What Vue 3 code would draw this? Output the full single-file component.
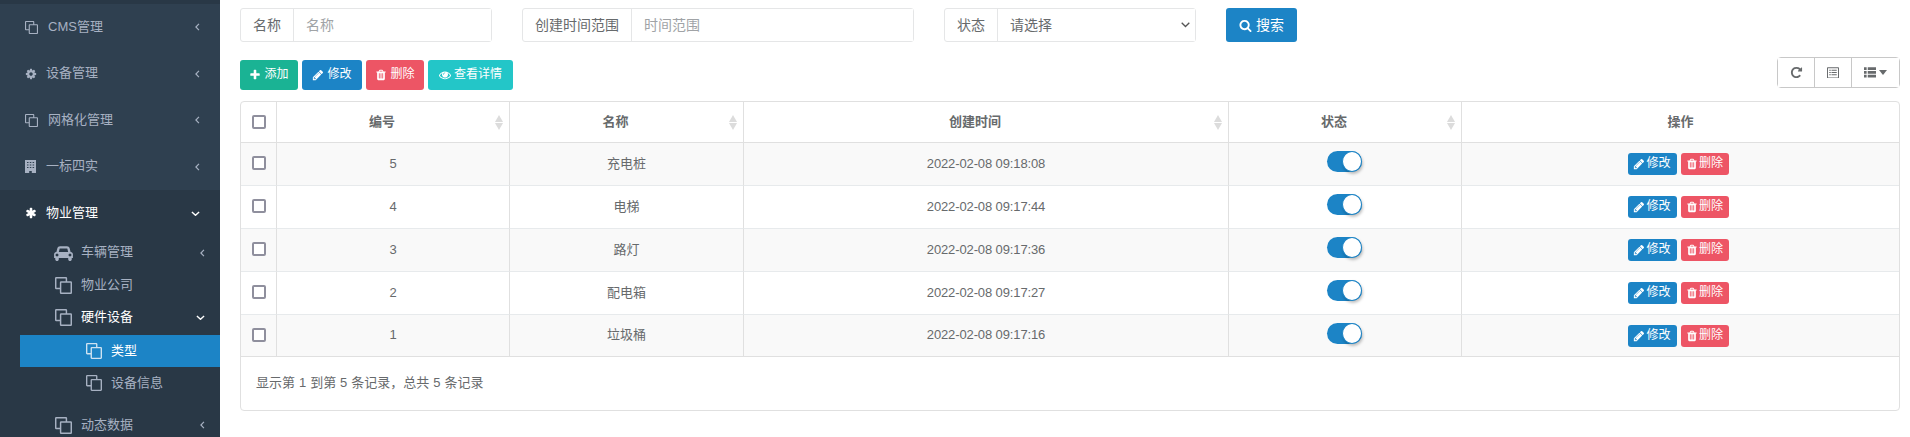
<script setup>
const P = {
  gear: ['0 0 1792 1792', 'M1152 896q0-106-75-181t-181-75-181 75-75 181 75 181 181 75 181-75 75-181zm512-109v222q0 12-8 23t-20 13l-185 28q-19 54-39 91 35 50 107 138 10 12 10 25t-9 23q-27 37-99 108t-94 71q-12 0-26-9l-138-108q-44 23-91 38-16 136-29 186-7 28-36 28h-222q-14 0-24.5-8.5t-11.5-21.5l-28-184q-49-16-90-37l-141 107q-10 9-25 9-14 0-25-11-126-114-165-168-7-10-7-23 0-12 8-23 15-21 51-66.5t54-70.5q-27-50-41-99l-183-27q-13-2-21-12.5t-8-23.5v-222q0-12 8-23t19-13l186-28q14-46 39-92-40-57-107-138-10-12-10-24 0-10 9-23 26-36 98.5-107.5t94.5-71.5q13 0 26 10l138 107q44-23 91-38 16-136 29-186 7-28 36-28h222q14 0 24.5 8.5t11.5 21.5l28 184q49 16 90 37l142-107q9-9 24-9 13 0 25 10 129 119 165 170 7 8 7 22 0 12-8 23-15 21-51 66.5t-54 70.5q26 50 41 98l183 28q13 2 21 12.5t8 23.5z'],
  plus: ['0 0 1792 1792', 'M1600 736v192q0 40-28 68t-68 28h-416v416q0 40-28 68t-68 28h-192q-40 0-68-28t-28-68v-416h-416q-40 0-68-28t-28-68v-192q0-40 28-68t68-28h416v-416q0-40 28-68t68-28h192q40 0 68 28t28 68v416h416q40 0 68 28t28 68z'],
  pencil: ['0 0 1792 1792', 'M491 1536l91-91-235-235-91 91v107h128v128h107zm523-928q0-22-22-22-10 0-17 7l-542 542q-7 7-7 17 0 22 22 22 10 0 17-7l542-542q7-7 7-17zm-54-192l416 416-832 832h-416v-416zm683 96q0 53-37 90l-166 166-416-416 166-165q36-38 90-38 53 0 91 38l235 234q37 39 37 91z'],
  trash: ['0 0 1792 1792', 'M704 1376v-704q0-14-9-23t-23-9h-64q-14 0-23 9t-9 23v704q0 14 9 23t23 9h64q14 0 23-9t9-23zm256 0v-704q0-14-9-23t-23-9h-64q-14 0-23 9t-9 23v704q0 14 9 23t23 9h64q14 0 23-9t9-23zm256 0v-704q0-14-9-23t-23-9h-64q-14 0-23 9t-9 23v704q0 14 9 23t23 9h64q14 0 23-9t9-23zm-544-992h448l-48-117q-7-9-17-11h-317q-10 2-17 11zm928 32v64q0 14-9 23t-23 9h-96v948q0 83-47 143.5t-113 60.5h-832q-66 0-113-58.5t-47-141.5v-952h-96q-14 0-23-9t-9-23v-64q0-14 9-23t23-9h309l70-167q15-37 54-63t79-26h320q40 0 79 26t54 63l70 167h309q14 0 23 9t9 23z'],
  eye: ['0 0 1792 1792', 'M1664 960q-152-236-381-353 61 104 61 225 0 185-131.5 316.5t-316.5 131.5-316.5-131.5-131.5-316.5q0-121 61-225-229 117-381 353 133 205 333.5 326.5t434.5 121.5 434.5-121.5 333.5-326.5zm-720-384q0-20-14-34t-34-14q-125 0-214.5 89.5t-89.5 214.5q0 20 14 34t34 14 34-14 14-34q0-86 61-147t147-61q20 0 34-14t14-34zm848 384q0 34-20 69-140 230-376.5 368.5t-499.5 138.5-499.5-139-376.5-368q-20-35-20-69t20-69q140-229 376.5-368t499.5-139 499.5 139 376.5 368q20 35 20 69z'],
  search: ['0 0 1792 1792', 'M1216 832q0-185-131.5-316.5t-316.5-131.5-316.5 131.5-131.5 316.5 131.5 316.5 316.5 131.5 316.5-131.5 131.5-316.5zm512 832q0 52-38 90t-90 38q-54 0-90-38l-343-342q-179 124-399 124-143 0-273.5-55.5t-225-150-150-225-55.5-273.5 55.5-273.5 150-225 225-150 273.5-55.5 273.5 55.5 225 150 150 225 55.5 273.5q0 220-124 399l343 343q37 37 37 90z'],
  repeat: ['0 0 1792 1792', 'M1664 256v448q0 26-19 45t-45 19h-448q-42 0-59-40-17-39 14-69l138-138q-148-137-349-137-104 0-198.5 40.5t-163.5 109.5-109.5 163.5-40.5 198.5 40.5 198.5 109.5 163.5 163.5 109.5 198.5 40.5q119 0 225-52t179-147q7-10 23-12 15 0 25 9l137 138q9 8 9.5 20.5t-7.5 22.5q-109 132-264 204.5t-327 72.5q-156 0-298-61t-245-164-164-245-61-298 61-298 164-245 245-164 298-61q147 0 284.5 55.5t244.5 156.5l130-129q29-31 70-14 39 17 39 59z'],
  car: ['0 0 2048 1792', 'M480 1088q0-66-47-113t-113-47-113 47-47 113 47 113 113 47 113-47 47-113zm36-320h1016l-89-357q-2-8-14-17.5t-21-9.5h-768q-9 0-21 9.5t-14 17.5zm1372 320q0-66-47-113t-113-47-113 47-47 113 47 113 113 47 113-47 47-113zm160-96v384q0 14-9 23t-23 9h-96v128q0 80-56 136t-136 56-136-56-56-136v-128h-1024v128q0 80-56 136t-136 56-136-56-56-136v-128h-96q-14 0-23-9t-9-23v-384q0-93 65.5-158.5t158.5-65.5h28l105-419q23-94 104-157.5t179-63.5h768q98 0 179 63.5t104 157.5l105 419h28q93 0 158.5 65.5t65.5 158.5z'],
  asterisk: ['0 0 1792 1792', 'M1546 1050q46 26 59.5 77.5t-12.5 97.5l-64 110q-26 46-77.5 59.5t-97.5-12.5l-266-153v307q0 52-38 90t-90 38h-128q-52 0-90-38t-38-90v-307l-266 153q-46 26-97.5 12.5t-77.5-59.5l-64-110q-26-46-12.5-97.5t59.5-77.5l266-154-266-154q-46-26-59.5-77.5t12.5-97.5l64-110q26-46 77.5-59.5t97.5 12.5l266 153v-307q0-52 38-90t90-38h128q52 0 90 38t38 90v307l266-153q46-26 97.5-12.5t77.5 59.5l64 110q26 46 12.5 97.5t-59.5 77.5l-266 154z'],
  building: ['0 0 11 13', 'M0 0h11v13H6.800v-2H4.200v2H0zM2 2v1h1.500V2zm2.800 0v1h1.500V2zm2.800 0v1h1.500V2zM2 4.500v1h1.500v-1zm2.800 0v1h1.500v-1zm2.800 0v1h1.500v-1zM2 7v1h1.500V7zm2.800 0v1h1.500V7zm2.800 0v1h1.500V7z'],
  copy: ['0 0 14 14', 'M1 0h8a1 1 0 0 1 1 1v2.500h3a1 1 0 0 1 1 1V13a1 1 0 0 1-1 1H5a1 1 0 0 1-1-1v-3H1a1 1 0 0 1-1-1V1a1 1 0 0 1 1-1zm.2 1.200v7.600H4V4.500a1 1 0 0 1 1-1h3.800V1.200zm4 3.500v8.100h7.600V4.700z'],
  listAlt: ['0 0 16 15', 'M1 0h14a1 1 0 0 1 1 1v13a1 1 0 0 1-1 1H1a1 1 0 0 1-1-1V1a1 1 0 0 1 1-1zm.3 1.500v12.200h13.400V1.500zM3 3.500h2v1.400H3zm3 0h7v1.400H6zM3 6.500h2v1.400H3zm3 0h7v1.400H6zM3 9.500h2v1.400H3zm3 0h7v1.400H6z'],
  thList: ['0 0 16 14', 'M0 0h3.500v3.800H0zm5 0h11v3.800H5zM0 5h3.500v3.800H0zm5 0h11v3.800H5zM0 10h3.500v3.800H0zm5 0h11v3.800H5z'],
  caret: ['0 0 8 5', 'M0 0h8L4 5z']
}

const mainMenu = [
  { label: 'CMS管理', icon: 'copy', cls: 'w13', gap: 'g10' },
  { label: '设备管理', icon: 'gear', cls: 'w12', gap: 'g9' },
  { label: '网格化管理', icon: 'copy', cls: 'w13', gap: 'g10' },
  { label: '一标四实', icon: 'building', cls: 'w11', gap: 'g10' }
]

const toolbar = [
  { label: '添加', icon: 'plus', cls: 'success', size: 'b58' },
  { label: '修改', icon: 'pencil', cls: 'primary', size: 'b60' },
  { label: '删除', icon: 'trash', cls: 'danger', size: 'b58' },
  { label: '查看详情', icon: 'eye', cls: 'info', size: 'b85' }
]

const heads = [
  { label: '编号', sort: true },
  { label: '名称', sort: true },
  { label: '创建时间', sort: true },
  { label: '状态', sort: true },
  { label: '操作', sort: false }
]

const rows = [
  { id: 5, name: '充电桩', time: '2022-02-08 09:18:08' },
  { id: 4, name: '电梯', time: '2022-02-08 09:17:44' },
  { id: 3, name: '路灯', time: '2022-02-08 09:17:36' },
  { id: 2, name: '配电箱', time: '2022-02-08 09:17:27' },
  { id: 1, name: '垃圾桶', time: '2022-02-08 09:17:16' }
]
</script>

<template>
  <div class="page">
    <aside class="sidebar">
      <ul class="nav">
        <li v-for="m in mainMenu" :key="m.label" class="item">
          <svg class="ic" :class="m.cls" :viewBox="P[m.icon][0]"><path :d="P[m.icon][1]" fill-rule="evenodd" /></svg>
          <span class="lbl" :class="m.gap">{{ m.label }}</span>
          <svg class="chev" viewBox="0 0 6 10"><path d="M4.800 1 1 5l3.800 4" /></svg>
        </li>
        <li class="group">
          <div class="item open">
            <svg class="ic w12" :viewBox="P.asterisk[0]"><path :d="P.asterisk[1]" /></svg>
            <span class="lbl g9">物业管理</span>
            <svg class="chevd" viewBox="0 0 10 6"><path d="M1 1l4 3.800L9 1" /></svg>
          </div>
          <ul class="sub">
            <li class="sitem">
              <svg class="car" :viewBox="P.car[0]"><path :d="P.car[1]" /></svg>
              <span>车辆管理</span>
              <svg class="chev s" viewBox="0 0 6 10"><path d="M4.800 1 1 5l3.800 4" /></svg>
            </li>
            <li class="sitem">
              <svg class="sic" :viewBox="P.copy[0]"><path :d="P.copy[1]" fill-rule="evenodd" /></svg>
              <span>物业公司</span>
            </li>
            <li class="sitem on">
              <svg class="sic" :viewBox="P.copy[0]"><path :d="P.copy[1]" fill-rule="evenodd" /></svg>
              <span>硬件设备</span>
              <svg class="chevd s" viewBox="0 0 10 6"><path d="M1 1l4 3.800L9 1" /></svg>
            </li>
            <li class="third">
              <div class="titem active">
                <svg class="sic" :viewBox="P.copy[0]"><path :d="P.copy[1]" fill-rule="evenodd" /></svg>
                <span>类型</span>
              </div>
              <div class="titem">
                <svg class="sic" :viewBox="P.copy[0]"><path :d="P.copy[1]" fill-rule="evenodd" /></svg>
                <span>设备信息</span>
              </div>
            </li>
            <li class="sitem">
              <svg class="sic" :viewBox="P.copy[0]"><path :d="P.copy[1]" fill-rule="evenodd" /></svg>
              <span>动态数据</span>
              <svg class="chev s" viewBox="0 0 6 10"><path d="M4.800 1 1 5l3.800 4" /></svg>
            </li>
          </ul>
        </li>
      </ul>
    </aside>

    <main class="main">
      <form class="filters" @submit.prevent>
        <div class="igroup g1">
          <span class="addon">名称</span>
          <input class="field" type="text" placeholder="名称" />
        </div>
        <div class="igroup g2">
          <span class="addon">创建时间范围</span>
          <input class="field" type="text" placeholder="时间范围" />
        </div>
        <div class="igroup g1">
          <span class="addon">状态</span>
          <select class="field sel"><option>请选择</option></select>
        </div>
        <button class="btn primary search" type="button">
          <svg class="bi s14" :viewBox="P.search[0]"><path :d="P.search[1]" /></svg>搜索
        </button>
      </form>

      <div class="bar">
        <div class="acts">
          <button v-for="b in toolbar" :key="b.label" class="btn act" :class="[b.cls, b.size]" type="button">
            <svg class="bi" :viewBox="P[b.icon][0]"><path :d="P[b.icon][1]" /></svg>{{ b.label }}
          </button>
        </div>
        <div class="tools">
          <button class="tool" type="button"><svg class="ti t1" :viewBox="P.repeat[0]"><path :d="P.repeat[1]" /></svg></button>
          <button class="tool" type="button"><svg class="ti t2" :viewBox="P.listAlt[0]"><path :d="P.listAlt[1]" fill-rule="evenodd" /></svg></button>
          <button class="tool wide" type="button">
            <svg class="ti t3" :viewBox="P.thList[0]"><path :d="P.thList[1]" /></svg>
            <svg class="ti t4" :viewBox="P.caret[0]"><path :d="P.caret[1]" /></svg>
          </button>
        </div>
      </div>

      <div class="panel">
        <table class="grid">
          <colgroup>
            <col class="c0" /><col class="c1" /><col class="c1b" /><col class="c3" /><col class="c1" /><col />
          </colgroup>
          <thead>
            <tr>
              <th><input class="cb" type="checkbox" /></th>
              <th v-for="h in heads" :key="h.label">
                <div class="th">
                  <span class="thl">{{ h.label }}</span>
                  <span v-if="h.sort" class="sort"><i class="up"></i><i class="down"></i></span>
                </div>
              </th>
            </tr>
          </thead>
          <tbody>
            <tr v-for="r in rows" :key="r.id">
              <td><input class="cb" type="checkbox" /></td>
              <td>{{ r.id }}</td>
              <td>{{ r.name }}</td>
              <td class="time">{{ r.time }}</td>
              <td><span class="toggle"><span class="knob"></span></span></td>
              <td>
                <div class="ops">
                  <button class="btn xs x49 primary" type="button"><svg class="bi" :viewBox="P.pencil[0]"><path :d="P.pencil[1]" /></svg>修改</button>
                  <button class="btn xs x48 danger" type="button"><svg class="bi" :viewBox="P.trash[0]"><path :d="P.trash[1]" /></svg>删除</button>
                </div>
              </td>
            </tr>
          </tbody>
        </table>
        <div class="foot">显示第 1 到第 5 条记录，总共 5 条记录</div>
      </div>
    </main>
  </div>
</template>

<style scoped>
* { box-sizing: border-box; }
.page {
  display: flex;
  width: 1910px;
  height: 437px;
  overflow: hidden;
  background: #fff;
  color: #676a6c;
  font: 13px/1.43 "Liberation Sans", "Noto Sans CJK SC", sans-serif;
}
.sidebar {
  width: 220px;
  flex: none;
  height: 437px;
  overflow: hidden;
  background: #2f4050;
  border-top: 4px solid #293846;
  color: #a7b1c2;
}
ul { list-style: none; margin: 0; padding: 0; }
.item {
  height: 46.5px;
  display: flex;
  align-items: center;
  padding: 0 20px 0 25px;
  fill: #a7b1c2;
}
.ic { flex: none; height: 14px; }
.w13 { width: 13px; height: 13px; }
.w12 { width: 12px; }
.w11 { width: 11px; height: 13px; }
.lbl { flex: 1; }
.g10 { margin-left: 10px; }
.g9 { margin-left: 9px; }
.chev { width: 5px; height: 8px; fill: none; stroke: #a7b1c2; stroke-width: 1.5; flex: none; margin-right: 0; }
.chevd { width: 9px; height: 5.400px; fill: none; stroke: #fff; stroke-width: 1.5; flex: none; margin-right: 0; }
.group { background: #293846; }
.open { color: #fff; fill: #fff; }
.sub { padding: 0; }
.sitem {
  height: 32.5px;
  display: flex;
  align-items: center;
  padding: 0 15px 0 54px;
  fill: #a7b1c2;
}
.sitem span { flex: 1; margin-left: 8px; }
.sic { width: 17px; height: 17px; margin-left: 1px; flex: none; }
.car { width: 19px; height: 16.500px; flex: none; }
.sitem .sic + span { margin-left: 9px; }
.chevd.s { margin-right: 0; }
.sitem.on { color: #fff; }
.third { padding: 1px 0 10px 20px; }
.titem {
  height: 32px;
  display: flex;
  align-items: center;
  padding-left: 65px;
  fill: #a7b1c2;
}
.titem span { margin-left: 9px; }
.titem .sic { width: 16px; height: 16px; }
.titem.active { background: #1c84c6; color: #fff; fill: #cfe3f2; }

.main { flex: 1; min-width: 0; padding: 8px 10px 0 20px; }
.filters { display: flex; gap: 30px; height: 34px; margin-bottom: 15px; font-size: 14px; }
.igroup {
  display: flex;
  height: 34px;
  border: 1px solid #e5e6e7;
  border-radius: 3px;
}
.g1 { width: 252px; }
.g2 { width: 392px; }
.addon {
  flex: none;
  padding: 0 12px;
  line-height: 32px;
  border-right: 1px solid #e5e6e7;
  color: #676a6c;
}
.field {
  flex: 1;
  min-width: 0;
  border: 0;
  outline: 0;
  padding: 0 12px;
  background-color: #fff;
  color: #676a6c;
  font: inherit;
}
.field::placeholder { color: #a0a3a6; opacity: 1; }
.sel {
  appearance: none;
  background-image: url("data:image/svg+xml,%3Csvg xmlns='http://www.w3.org/2000/svg' width='9' height='6' viewBox='0 0 9 6'%3E%3Cpath d='M.7.7l3.800 3.800L8.300.7' fill='none' stroke='%23555' stroke-width='1.300'/%3E%3C/svg%3E");
  background-repeat: no-repeat;
  background-position: right 5px center;
}
.btn {
  display: inline-flex;
  align-items: center;
  justify-content: center;
  border: 0;
  border-radius: 3px;
  color: #fff;
  fill: #fff;
  padding: 0;
  font: inherit;
}
.primary { background: #1c84c6; }
.success { background: #1ab394; }
.danger { background: #ed5565; }
.info { background: #23c6c8; }
.search { width: 71px; height: 34px; }
.bi { width: 12px; height: 12px; margin-right: 3px; flex: none; }
.s14 { width: 13px; height: 13px; margin-right: 4px; }

.bar { display: flex; justify-content: space-between; height: 44px; }
.acts { display: flex; gap: 4px; height: 30px; margin-top: 3px; }
.act { font-size: 12px; }
.b58 { width: 58px; }
.b60 { width: 60px; }
.b85 { width: 85px; }
.tools { display: flex; height: 31px; border: 1px solid #c8c8c8; border-radius: 4px; }
.tool {
  width: 37px;
  display: flex;
  align-items: center;
  justify-content: center;
  padding: 0;
  border: 0;
  border-right: 1px solid #c8c8c8;
  background: #fff;
  fill: #676a6c;
}
.tool.wide { width: 47px; border-right: 0; }
.ti { flex: none; }
.t1 { width: 13px; height: 13px; }
.t2 { width: 12px; height: 11.500px; }
.t3 { width: 12px; height: 11px; }
.t4 { width: 8px; height: 5px; margin-left: 3px; }

.panel {
  width: 1660px;
  height: 310px;
  border: 1px solid #e0e0e0;
  border-radius: 4px;
}
.grid { width: 100%; table-layout: fixed; border-collapse: separate; border-spacing: 0; }
.c0 { width: 36px; }
.c1 { width: 233px; }
.c1b { width: 234px; }
.c3 { width: 485px; }
th, td {
  padding: 0;
  text-align: center;
  vertical-align: middle;
  border-right: 1px solid #e0e0e0;
  border-bottom: 1px solid #e7eaec;
}
th:last-child, td:last-child { border-right: 0; }
th { height: 41px; border-bottom-color: #e0e0e0; font-weight: 700; }
td { height: 43px; }
.time { letter-spacing: -.12px; }
tbody tr:nth-child(odd) td { background: #f9f9f9; }
tbody tr:last-child td { border-bottom-color: #e0e0e0; height: 42px; }
.cb {
  appearance: none;
  display: block;
  width: 14px;
  height: 14px;
  margin: 0 0 0 11px;
  border: 2px solid #8f8f9d;
  border-radius: 2px;
  background: #fff;
}
td .cb { margin-bottom: 2px; }
.th { display: flex; align-items: center; padding-top: 1px; }
.thl { flex: 1; padding-right: 22px; }
th:last-child .thl { padding-right: 0; }
.sort { width: 8px; margin: 0 6px 0 -14px; display: flex; flex-direction: column; gap: 1px; }
.sort i { display: block; border-left: 4px solid transparent; border-right: 4px solid transparent; }
.up { border-bottom: 7px solid #dcdcdc; }
.down { border-top: 7px solid #dcdcdc; }
.toggle {
  display: inline-block;
  position: relative;
  vertical-align: middle;
  width: 35px;
  height: 21px;
  margin: 0 2px 5px 0;
  border-radius: 11px;
  background: #1c84c6;
}
.knob {
  position: absolute;
  right: 0;
  top: 0;
  width: 20px;
  height: 21px;
  border: 1px solid #1c84c6;
  border-radius: 50%;
  background: #fff;
  box-shadow: 1px 2px 3px rgba(0,0,0,.25);
}
.ops { display: flex; justify-content: center; gap: 4px; padding-right: 5px; }
.xs { height: 22px; font-size: 12px; }
.x49 { width: 49px; }
.x48 { width: 48px; }
.xs .bi { width: 12px; height: 12px; margin-right: 1px; }
.foot { height: 54px; padding-left: 15px; line-height: 52px; word-spacing: .35px; }
</style>

<style>
html, body { margin: 0; background: #fff; }
</style>
